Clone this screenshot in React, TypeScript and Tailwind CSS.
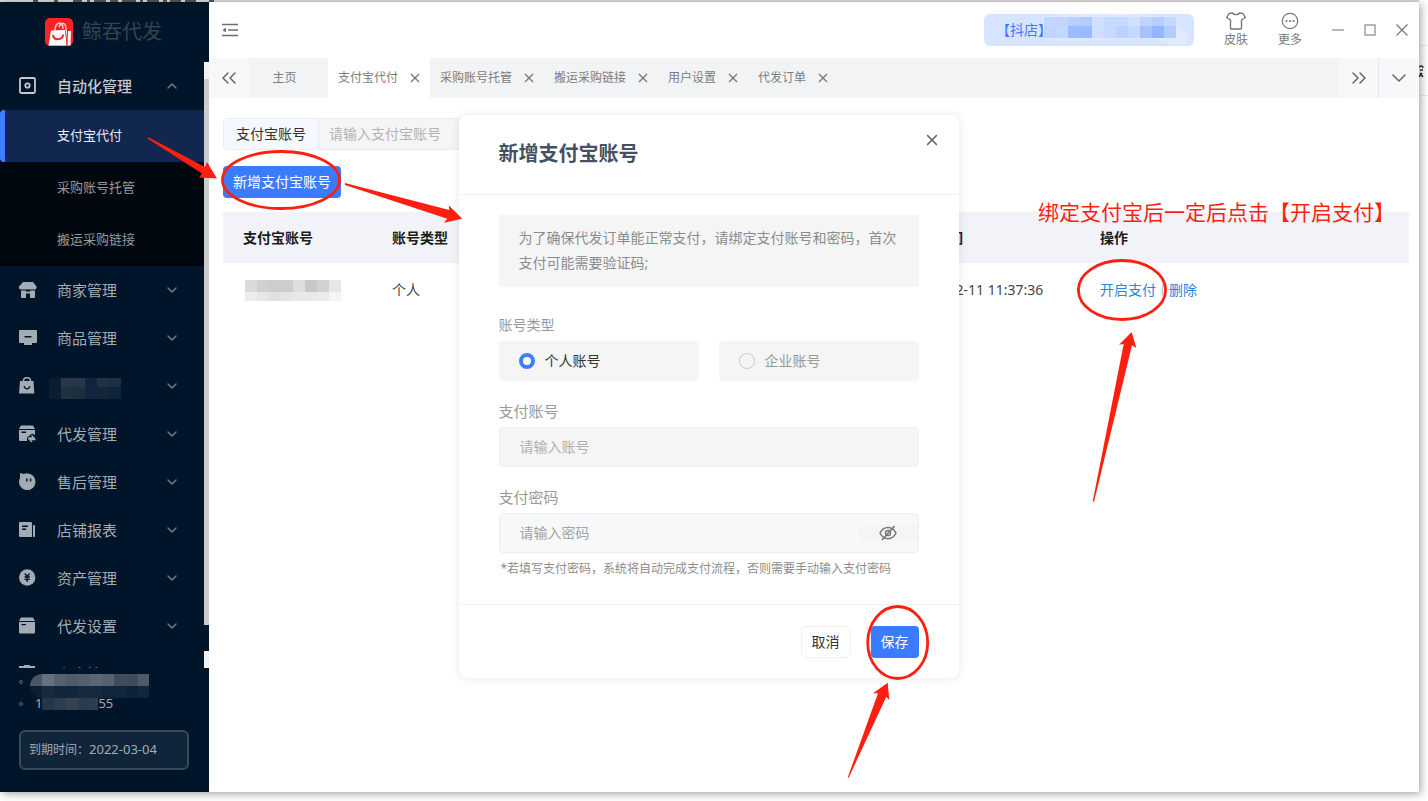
import { useState } from 'react';
import type { ReactNode } from 'react';
import { ChevronDown, ChevronUp, ChevronsLeft, ChevronsRight, X } from 'lucide-react';

interface MenuItem {
  key: string;
  label: string;
  icon: ReactNode;
}

interface Cell {
  x: number;
  y: number;
  w: number;
  h: number;
  fill: string;
}

const iconProps = { width: 18, height: 18, viewBox: '0 0 18 18', fill: 'currentColor' };

const menuItems: MenuItem[] = [
  {
    key: 'merchant',
    label: '商家管理',
    icon: (
      <svg {...iconProps}>
        <path d="M4 1h10l3.500 4.500V7a2 2 0 0 1-2 1.500H2A2 2 0 0 1 0 7V5.500z" />
        <path d="M2 9.500h4.500a3 3 0 0 0 5 0H16V16a1 1 0 0 1-1 1h-4v-4.500H7V17H3a1 1 0 0 1-1-1z" />
      </svg>
    ),
  },
  {
    key: 'goods',
    label: '商品管理',
    icon: (
      <svg {...iconProps}>
        <path fillRule="evenodd" d="M1 1h16a1 1 0 0 1 1 1v11a1 1 0 0 1-1 1h-4v2H5v-2H1a1 1 0 0 1-1-1V2a1 1 0 0 1 1-1zm4.500 6v1.500h7V7z" />
      </svg>
    ),
  },
  {
    key: 'masked',
    label: '',
    icon: (
      <svg {...iconProps}>
        <path d="M4.500 5V3.500A3 3 0 0 1 7.500.8h1a3 3 0 0 1 3 2.700V5" fill="none" stroke="currentColor" strokeWidth="1.500" />
        <path fillRule="evenodd" d="M1 4h13.500l.8 12.500H0zm3.500 5c.5 4.500 6.500 4.500 7 0h-1.300c-.6 2.700-3.800 2.700-4.400 0z" />
      </svg>
    ),
  },
  {
    key: 'dispatch',
    label: '代发管理',
    icon: (
      <svg {...iconProps}>
        <path d="M2 .5h12L16 4H0z" />
        <path fillRule="evenodd" d="M0 5h16v5l-3-1.500-5 4V16H1a1 1 0 0 1-1-1zm2.500 1.500V8H7V6.500z" />
        <path d="M9 13h6l-2.500-2.700M16.500 14.500h-6L13 17" fill="none" stroke="currentColor" strokeWidth="1.300" />
      </svg>
    ),
  },
  {
    key: 'after-sale',
    label: '售后管理',
    icon: (
      <svg {...iconProps}>
        <path
          fillRule="evenodd"
          d="M1 0l4 1a8.200 8.200 0 0 1 11.400 7.500A8.200 8.200 0 1 1 1 5zm6 5.500v3h1.500v-3zm3.800 0v3h1.500v-3z"
        />
      </svg>
    ),
  },
  {
    key: 'report',
    label: '店铺报表',
    icon: (
      <svg {...iconProps}>
        <path fillRule="evenodd" d="M1 1h11a1 1 0 0 1 1 1v14H1a1 1 0 0 1-1-1V2a1 1 0 0 1 1-1zm2 3.500V6h6V4.500zm0 3V9h4V7.500z" />
        <path d="M14 4h1a1 1 0 0 1 1 1v10a1 1 0 0 1-1 1h-1z" />
      </svg>
    ),
  },
  {
    key: 'assets',
    label: '资产管理',
    icon: (
      <svg {...iconProps}>
        <circle cx="8.200" cy="8.500" r="8.200" />
        <path d="M5.800 4.500l2.400 3 2.400-3M8.200 7.500v5.500M5.500 8h5.400M5.500 10.300h5.400" fill="none" stroke="#001529" strokeWidth="1.300" />
      </svg>
    ),
  },
  {
    key: 'settings',
    label: '代发设置',
    icon: (
      <svg {...iconProps}>
        <path d="M2 .5h12L16 4H0z" />
        <path fillRule="evenodd" d="M0 5h16v10.500a1 1 0 0 1-1 1H1a1 1 0 0 1-1-1zm2.500 2v1.300H7V7z" />
      </svg>
    ),
  },
  {
    key: 'security',
    label: '安全管理',
    icon: (
      <svg {...iconProps}>
        <path d="M5 0h6v1h5v15H0V1h5z" />
      </svg>
    ),
  },
];

const subItems = ['支付宝代付', '采购账号托管', '搬运采购链接'];
const tabs = ['支付宝代付', '采购账号托管', '搬运采购链接', '用户设置', '代发订单'];

const row = (colors: string[], y: number, h: number, x = 0, w = 12): Cell[] =>
  colors.map((fill, i) => ({ x: x + i * w, y, w, h, fill }));

const menuMask = [
  ...row(['#0a1e30', '#283747', '#283747', '#10253b', '#203243', '#1c3042'], 0, 9),
  ...row(['#0a1e30', '#1f3040', '#1b2d3f', '#13263e', '#132739', '#0f2339'], 9, 12),
];

const accountMask = [
  ...row(['#dadada', '#d0d0d0', '#cdcdcd', '#cdcdcd', '#dedede', '#c8c8c8', '#d2d2d2', '#e6e6e6'], 0, 12),
  ...row(['#ececec', '#e6e6e6', '#e0e0e0', '#e5e5e5', '#e9e9e9', '#e9e9e9', '#ebebeb', '#f4f4f4'], 12, 9),
];

const shopMask = [
  ...row(['#c4d7ff', '#c1d5ff', '#b9cfff', '#b5ccff', '#cfdfff', '#c8daff', '#c8dbff', '#d0e0ff', '#c0d4ff', '#b8ceff', '#c4d7ff'], 4, 9, 4),
  ...row(['#c0d4ff', '#c4d7ff', '#9dbcff', '#9bbaff', '#cfdfff', '#c7d9ff', '#bcd1ff', '#c6d8ff', '#a5c2ff', '#94b5ff', '#b4cbff'], 13, 12, 4),
];

const userMask = [
  ...row(['#4a5764', '#65717c', '#56626e', '#4f5c68', '#53606c', '#5b6772', '#56626e', '#3f4d5b', '#3d4c5a', '#4e5b67'], 0, 12),
  ...row(['#0c2034', '#162a3c', '#11263a', '#12273b', '#172b3d', '#15293c', '#11263b', '#12263a', '#0f2338', '#11253b'], 12, 12),
];

const phoneMask = row(['#23364a', '#2b3c4d', '#33434f', '#2a3b4b', '#2c3d4d'], 0, 12);

function Mosaic({ cells, width, height }: { cells: Cell[]; width: number; height: number }) {
  return (
    <svg width={width} height={height} className="shrink-0" shapeRendering="crispEdges" aria-hidden="true">
      {cells.map((c, i) => (
        <rect key={i} x={c.x} y={c.y} width={c.w} height={c.h} fill={c.fill} />
      ))}
    </svg>
  );
}

function Logo() {
  return (
    <svg width="28" height="28" viewBox="0 0 28 28" aria-hidden="true">
      <rect width="28" height="28" rx="5" fill="#fb2226" />
      <path d="M10 13c0-5 2-8 5-8 2 0 3 2 3 6" fill="none" stroke="#ffc9c9" strokeWidth="1.500" />
      <path d="M14 9c1-3 4-4 5.500-3S21 10 21 13" fill="none" stroke="#ffc9c9" strokeWidth="1.500" />
      <path d="M6 12.500l14-.5 1.500 15.500H3.500z" fill="#fff" />
      <path d="M21 13h5l-.5 14.500h-3z" fill="#fff" />
      <path d="M22.500 13l-.5 14" stroke="#fb2226" strokeWidth="1" />
      <path d="M8 17c1 6 9 5.500 10.500-.5" fill="none" stroke="#fb2226" strokeWidth="2" />
    </svg>
  );
}

function Sidebar() {
  const [active, setActive] = useState(subItems[0]);

  return (
    <aside className="flex w-[209px] shrink-0 flex-col bg-[#001529] text-[#a3abb3]">
      <div className="flex h-[60px] shrink-0 items-center gap-[9px] pl-[45px]">
        <Logo />
        <span className="text-xl text-[#364350]">鲸吞代发</span>
      </div>

      <div className="flex min-h-0 flex-1">
        <nav className="min-w-0 flex-1 overflow-hidden">
          <button className="flex h-12 w-full items-center gap-5 pr-6 pl-[19px] text-[15px] font-medium text-[#c3c9ce]">
            <svg width="18" height="18" viewBox="0 0 18 18" fill="none" stroke="currentColor" strokeWidth="1.800">
              <rect x="1" y="1" width="15" height="15" rx="1.500" />
              <circle cx="8.500" cy="8.500" r="2.200" />
            </svg>
            <span className="flex-1 text-left">自动化管理</span>
            <ChevronUp className="size-4 text-[#74808b]" />
          </button>
          <ul className="bg-[#00070e]">
            {subItems.map((item) => (
              <li key={item}>
                <button
                  onClick={() => setActive(item)}
                  className={
                    item === active
                      ? 'h-[52px] w-full rounded-l-sm border-l-[5px] border-[#3f7fff] bg-[#12274f] pl-[52px] text-left text-[13px] text-[#e8ebf1]'
                      : 'h-[52px] w-full pl-[57px] text-left text-[13px] text-[#969a9e]'
                  }
                >
                  {item}
                </button>
              </li>
            ))}
          </ul>
          {menuItems.map((item) => (
            <button
              key={item.key}
              className="flex h-12 w-full items-center gap-5 pr-6 pl-[19px] text-[15px]"
              aria-label={item.label || undefined}
            >
              {item.icon}
              {item.label ? (
                <span className="flex-1 text-left">{item.label}</span>
              ) : (
                <span className="-ml-2 flex-1 pt-1">
                  <Mosaic cells={menuMask} width={72} height={21} />
                </span>
              )}
              <ChevronDown className="size-4 text-[#74808b]" />
            </button>
          ))}
        </nav>
        <div className="flex w-[5px] shrink-0 flex-col">
          <div className="h-[17px] bg-[#f1f1f1]" />
          <div className="flex-1 bg-[#cccccc]" />
          <div className="h-[26px]" />
          <div className="h-[17px] bg-[#f1f1f1]" />
        </div>
      </div>

      <div className="shrink-0 pr-5 pb-[22px] pl-[19px] text-[13px]">
        <div className="flex h-[30px] items-end gap-[7px]">
          <i className="mb-[14px] size-1 rounded-full border border-[#5c6a77]" />
          <span className="overflow-hidden rounded-l-full">
            <Mosaic cells={userMask} width={119} height={24} />
          </span>
        </div>
        <div className="flex h-5 items-center gap-3 pb-2">
          <i className="size-1 rounded-full border border-[#5c6a77]" />
          <span className="flex h-5 items-center">
            1
            <Mosaic cells={phoneMask} width={56} height={12} />
            55
          </span>
        </div>
        <div className="mt-3 flex h-10 items-center rounded-md border-2 border-[#3a4857] bg-[#10253a] px-2 text-xs">
          到期时间：<span className="text-[13px]">2022-03-04</span>
        </div>
      </div>
    </aside>
  );
}

function TopBar() {
  return (
    <header className="flex h-14 items-center justify-between pr-[11px] pl-[13px] text-[#7a7a7a]">
      <button aria-label="收起菜单">
        <svg width="16" height="14" viewBox="0 0 16 14" fill="none" stroke="#6d6d6d" strokeWidth="1.500">
          <path d="M0 1.500h16M6 7h10M0 12.500h16" />
          <path d="M4 4.500v5L.5 7z" fill="#6d6d6d" stroke="none" />
        </svg>
      </button>

      <div className="flex items-center gap-[30px] text-xs">
        <div className="flex h-8 w-[210px] items-center rounded-md bg-[#d7e4ff] pl-3 text-sm text-[#3b7bff]">
          <span className="w-14 whitespace-nowrap">【抖店】</span>
          <svg width="150" height="34" viewBox="0 0 150 34" className="-ml-3 shrink-0" aria-hidden="true">
            <path d="M2 4C30 0 90 0 112 3s30 10 36 20c2 8-8 12-18 9-8-6-20-6-40-6s-60 4-86 0z" fill="#e0eaff" />
            {shopMask.map((c, i) => (
              <rect key={i} x={c.x} y={c.y} width={c.w} height={c.h} fill={c.fill} shapeRendering="crispEdges" />
            ))}
          </svg>
        </div>
        <button className="flex flex-col items-center gap-[2px]">
          <svg width="20" height="18" viewBox="0 0 20 18" fill="none" stroke="#777" strokeWidth="1.400" strokeLinejoin="round">
            <path d="M6.500 1c1.500 2.200 5.500 2.200 7 0L17 1.500l2.300 4L15.500 8v8a1 1 0 0 1-1 1h-9a1 1 0 0 1-1-1V8L.7 5.500l2.300-4z" />
          </svg>
          皮肤
        </button>
        <button className="flex flex-col items-center gap-[2px]">
          <svg width="18" height="18" viewBox="0 0 18 18" fill="none" stroke="#777" strokeWidth="1.200">
            <circle cx="9" cy="9" r="7.700" />
            <g fill="#777" stroke="none">
              <circle cx="5.500" cy="9" r="1.100" />
              <circle cx="9" cy="9" r="1.100" />
              <circle cx="12.500" cy="9" r="1.100" />
            </g>
          </svg>
          更多
        </button>
        <div className="flex items-center gap-5">
          <button aria-label="最小化">
            <svg width="12" height="12" stroke="#888" strokeWidth="1.200">
              <path d="M0 6h12" />
            </svg>
          </button>
          <button aria-label="最大化">
            <svg width="12" height="12" fill="none" stroke="#888" strokeWidth="1.200">
              <rect x="1" y="1" width="10" height="10" />
            </svg>
          </button>
          <button aria-label="关闭">
            <svg width="12" height="12" stroke="#777" strokeWidth="1.200">
              <path d="M.5.5l11 11M11.500.5l-11 11" />
            </svg>
          </button>
        </div>
      </div>
    </header>
  );
}

function TabBar() {
  const [active, setActive] = useState(tabs[0]);

  return (
    <div className="flex h-10 bg-[#f2f3f5] text-xs text-[#7c7c7c]">
      <button className="flex w-10 items-center justify-center bg-[#f7f8fa]" aria-label="向左滚动">
        <ChevronsLeft className="size-6 text-[#666]" strokeWidth={1.5} />
      </button>
      <button className="w-[79px] pr-2">主页</button>
      {tabs.map((tab) => (
        <div
          key={tab}
          className={tab === active ? 'flex items-center gap-3 bg-white px-[10px]' : 'flex items-center gap-3 px-[10px]'}
        >
          <button onClick={() => setActive(tab)}>{tab}</button>
          <button aria-label={`关闭${tab}`}>
            <svg width="10" height="10" stroke="#777" strokeWidth="1.300">
              <path d="M1 1l8 8M9 1l-8 8" />
            </svg>
          </button>
        </div>
      ))}
      <div className="ml-auto flex">
        <button className="flex w-10 items-center justify-center border-r border-[#e6e8eb] bg-[#f7f8fa]" aria-label="向右滚动">
          <ChevronsRight className="size-6 text-[#666]" strokeWidth={1.5} />
        </button>
        <button className="flex w-10 items-center justify-center bg-[#f7f8fa]" aria-label="更多标签">
          <ChevronDown className="size-6 text-[#666]" strokeWidth={1.5} />
        </button>
      </div>
    </div>
  );
}

function AccountTable() {
  return (
    <table className="mt-[14px] w-full table-fixed text-left text-sm">
      <colgroup>
        <col className="w-[149px]" />
        <col />
        <col className="w-[193px]" />
        <col className="w-[329px]" />
      </colgroup>
      <thead className="bg-[#f2f3f8] text-[#1c1c1c]">
        <tr className="h-[51px]">
          <th className="px-5">支付宝账号</th>
          <th className="px-5">账号类型</th>
          <th className="px-5">绑定时间</th>
          <th className="px-5">操作</th>
        </tr>
      </thead>
      <tbody className="text-[#444]">
        <tr className="h-[54px]">
          <td className="pl-[22px]">
            <Mosaic cells={accountMask} width={96} height={21} />
          </td>
          <td className="px-5">个人</td>
          <td className="pl-6 whitespace-nowrap">2022-02-11 11:37:36</td>
          <td className="px-5">
            <span className="flex items-center text-[#2b85d9]">
              <a href="#enable">开启支付</a>
              <span className="mx-[6px] h-3 border-l border-[#ccc]" />
              <a href="#delete">删除</a>
            </span>
          </td>
        </tr>
      </tbody>
    </table>
  );
}

function AccountDialog() {
  const [type, setType] = useState('personal');
  const options = [
    { value: 'personal', label: '个人账号' },
    { value: 'company', label: '企业账号' },
  ];

  return (
    <form
      role="dialog"
      aria-labelledby="dialog-title"
      className="w-[500px] rounded-lg bg-white shadow-[0_0_10px_rgba(0,0,0,0.10)]"
    >
      <div className="flex h-20 items-center justify-between border-b border-[#f2f3f5] pr-5 pl-10">
        <h2 id="dialog-title" className="text-xl font-bold text-[#455162]">
          新增支付宝账号
        </h2>
        <button type="button" className="mb-7" aria-label="关闭">
          <X className="size-[14px] scale-125 text-[#6a6a6a]" strokeWidth={2} />
        </button>
      </div>

      <div className="px-10 pt-5 pb-[25px]">
        <p className="bg-[#f5f5f5] px-5 pt-[10px] pb-3 text-sm leading-[25px] text-[#8c8c8c]">
          为了确保代发订单能正常支付，请绑定支付账号和密码，首次支付可能需要验证码;
        </p>

        <fieldset className="mt-7">
          <legend className="mb-[6px] text-sm leading-5 text-[#999]">账号类型</legend>
          <div className="grid grid-cols-2 gap-5">
            {options.map((o) => (
              <label
                key={o.value}
                className="flex h-10 items-center gap-[10px] rounded bg-[#f5f5f5] px-5 text-sm text-[#999] has-checked:text-[#333]"
              >
                <input
                  type="radio"
                  name="type"
                  value={o.value}
                  checked={type === o.value}
                  onChange={() => setType(o.value)}
                  className="size-4 appearance-none rounded-full border border-[#c3cbdc] checked:border-4 checked:border-[#3f7fff] checked:bg-white"
                />
                {o.label}
              </label>
            ))}
          </div>
        </fieldset>

        <label htmlFor="pay-account" className="mt-5 mb-[6px] block text-[15px] leading-5 text-[#999]">
          支付账号
        </label>
        <input
          id="pay-account"
          placeholder="请输入账号"
          className="block h-10 w-full rounded border border-[#eceef1] bg-[#f5f5f5] px-5 text-sm placeholder:text-[#b0b0b0]"
        />

        <label htmlFor="pay-password" className="mt-5 mb-[6px] block text-[15px] leading-5 text-[#999]">
          支付密码
        </label>
        <div className="flex h-10 items-center rounded border border-[#eceef1] bg-[#f7f8fa]">
          <input
            id="pay-password"
            type="password"
            placeholder="请输入密码"
            className="h-full min-w-0 flex-1 bg-transparent px-5 text-sm placeholder:text-[#a3a3a3]"
          />
          <button type="button" className="bg-[#f5f5f6] pr-[21px] pl-5" aria-label="显示密码">
            <svg width="18" height="16" viewBox="0 0 18 16" fill="none" stroke="#777" strokeWidth="1.500">
              <path d="M1 8c3.500-7.500 12.500-7.500 16 0-3.500 7.500-12.500 7.500-16 0z" />
              <circle cx="9" cy="8" r="2.500" />
              <path d="M15.500 1L3 15" />
            </svg>
          </button>
        </div>
        <p className="mt-[6px] px-[2px] text-xs leading-5 text-[#8c8c8c]">
          *若填写支付密码，系统将自动完成支付流程，否则需要手动输入支付密码
        </p>
      </div>

      <div className="flex justify-end gap-5 border-t border-[#f2f3f5] px-10 pt-[21px] pb-5 text-sm">
        <button type="button" className="h-8 rounded-md border border-[#eef0f4] px-[10px] text-[#333]">
          取消
        </button>
        <button type="button" className="h-8 rounded bg-[#3b7cff] px-[10px] text-white">
          保存
        </button>
      </div>
    </form>
  );
}

// Edges of the page that lies behind the window
function Backdrop() {
  return (
    <svg className="absolute inset-0 size-full" aria-hidden="true">
      <path d="M33 1h5M54 1h4M73 1h9M87 1h3M94 1h12M110 1h8M122 1h14M140 1h3M147 1h12M163 1h4M170 1h11M185 1h11M209 1h5" stroke="#555" strokeWidth="2" />
      <svg x="100%" overflow="visible">
        <path d="M-9 45.500h9M-9 95.500h9" stroke="#ececec" />
        <path d="M-9 67c2-2 4-1 4 1M-8 70h3M-8 73l3 4M-9 77l3-4" fill="none" stroke="#333" strokeWidth="1.500" />
      </svg>
    </svg>
  );
}

// Red guide marks drawn over the window
function GuideMarks() {
  return (
    <div className="pointer-events-none absolute inset-0 z-20">
      <svg className="size-full" fill="#ff1f10" aria-hidden="true">
        <g fill="none" stroke="#ff1f10" strokeWidth="2.800">
          <ellipse cx="281" cy="180" rx="58.500" ry="28.500" />
          <ellipse cx="1122" cy="290" rx="43.600" ry="29.500" />
          <ellipse cx="897.700" cy="642.500" rx="30" ry="36" />
        </g>
        <path d="M148 137l57 30 2-5 10 16.500-18-1 3-4-54.500-35z" />
        <path d="M345 183l104.300 27-.6-4.700 13.600 13.400-18.300 4 3.300-4L345 185z" />
        <path d="M1092.700 501.500l31-157.500-4.700.7 12.700-12.700 4.600 16-4.300-2.700-38 156.500z" />
        <path d="M847.700 777.500l30.300-84.200h-5l14.700-10.600 1.600 17.600-3-3.600-37.600 81z" />
      </svg>
      <p className="absolute top-[197px] left-[1038px] text-[21px] leading-[30px] whitespace-nowrap text-[#ff1f10]">
        绑定支付宝后一定后点击【开启支付】
      </p>
    </div>
  );
}

export default function App() {
  return (
    <div
      lang="zh-CN"
      className="relative flex h-screen flex-col overflow-hidden bg-white pr-[9px] pb-[9px] font-['Noto_Sans','Noto_Sans_CJK_SC',sans-serif]"
    >
      <div className="h-[2px] shrink-0 bg-[#d9d9d9]" />
      <Backdrop />
      <div className="relative flex min-h-0 flex-1 bg-white shadow-[2px_2px_8px_rgba(0,0,0,0.35)]">
        <Sidebar />
        <main className="min-w-0 flex-1">
          <TopBar />
          <TabBar />
          <div className="pt-5 pr-[10px] pl-[14px]">
            <div className="flex h-8 w-[300px] rounded border border-[#e9edf3] text-sm">
              <label htmlFor="search-account" className="flex items-center border-r border-[#e9edf3] bg-[#f5f8fe] px-3 text-[#333]">
                支付宝账号
              </label>
              <input
                id="search-account"
                placeholder="请输入支付宝账号"
                className="min-w-0 flex-1 bg-[#f5f5f5] px-[10px] placeholder:text-[#b3b3b3]"
              />
            </div>
            <button className="mt-4 h-8 rounded bg-[#3b7cff] px-[10px] text-sm text-white">新增支付宝账号</button>
            <AccountTable />
          </div>
        </main>

        <div className="absolute inset-0 z-10 flex items-center justify-center pr-[2px] pb-[2px]">
          <AccountDialog />
        </div>
      </div>
      <GuideMarks />
    </div>
  );
}
